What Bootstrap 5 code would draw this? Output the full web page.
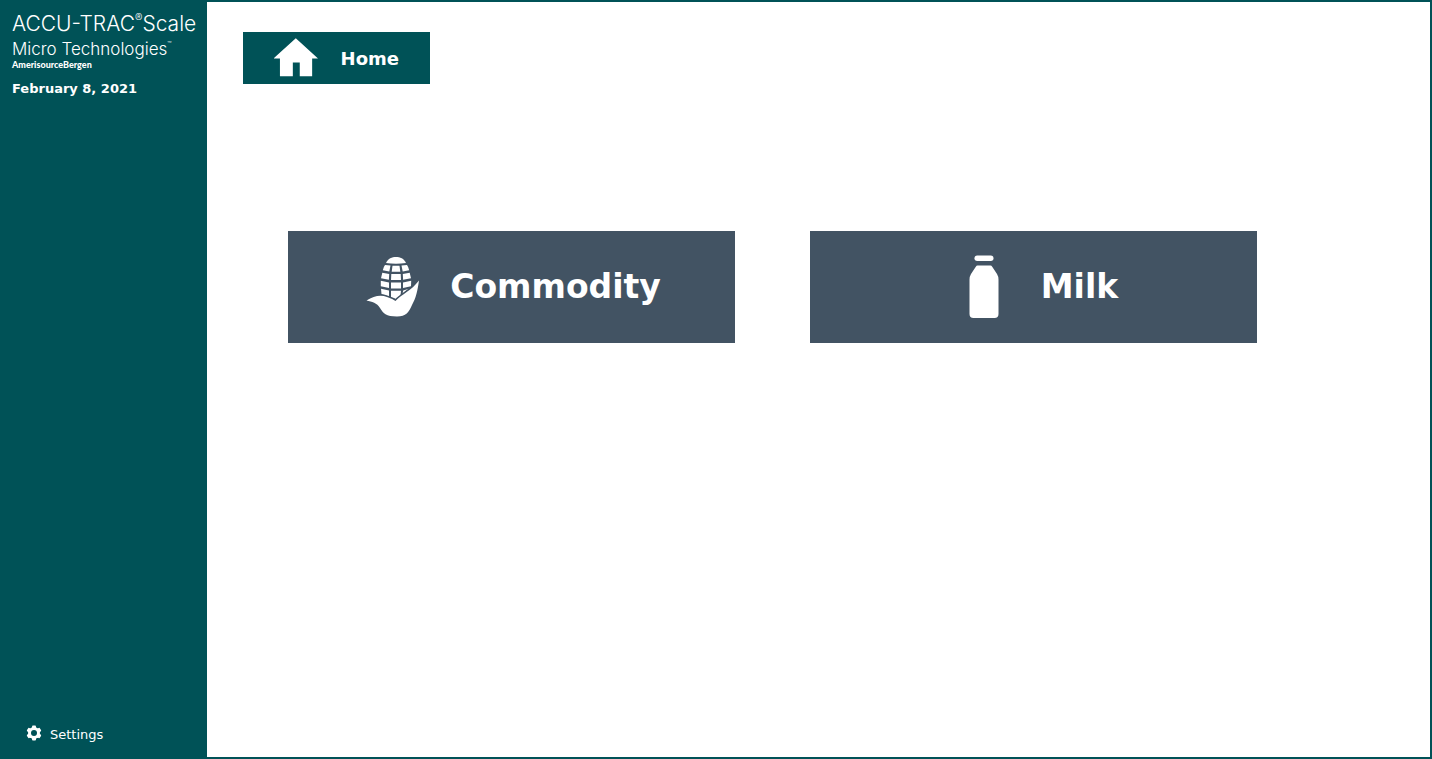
<!DOCTYPE html>
<html lang="en">
<head>
<meta charset="utf-8">
<meta name="viewport" content="width=device-width, initial-scale=1">
<title>ACCU-TRAC Scale</title>
<link href="https://cdn.jsdelivr.net/npm/bootstrap@5.3.0/dist/css/bootstrap.min.css" rel="stylesheet">
<style>
  :root { --teal: #005257; --slate: #425363; }
  body { font-family: "DejaVu Sans", Verdana, sans-serif; background: var(--teal); }
  .side { width: 207px; padding: 12px 0 14px 12px; background: var(--teal); }
  .brand { font-family: Inter, sans-serif; font-weight: 300; white-space: nowrap; }
  .brand-product { font-size: 21px; line-height: 24px; }
  .brand-product sup { font-size: 11px; top: -9px; line-height: 0; }
  .brand-division { font-size: 17px; line-height: 26px; }
  .brand-division sup { font-size: 7px; top: -8px; line-height: 0; }
  .brand-company { font-family: Lato, sans-serif; font-weight: 900; font-size: 9px; line-height: 6px; }
  .today { font-size: 13px; line-height: 16px; margin-top: 13px; }
  .settings { font-size: 13px; line-height: 20px; gap: 8px; margin-left: 14px; }
  .page { margin: 2px 2px 2px 0; padding: 30px 36px; }
  .btn { --bs-btn-border-radius: 0; --bs-btn-border-width: 0; --bs-btn-color: #fff; --bs-btn-hover-color: #fff; --bs-btn-font-weight: 700; }
  .btn-home { --bs-btn-bg: var(--teal); --bs-btn-hover-bg: #00454a; width: 187px; height: 52px; font-size: 18px; gap: 23px; padding: 0 31px; }
  .choices { gap: 75px; padding: 0 45px; margin-top: 147px; }
  .btn-choice { --bs-btn-bg: var(--slate); --bs-btn-hover-bg: #364553; flex: 0 1 447px; height: 112px; font-size: 33px; line-height: 52px; gap: 30px; padding: 0 8px 0 12px; }
  .btn-milk { gap: 42px; padding-left: 28px; }
</style>
</head>
<body>
<div class="d-flex min-vh-100">
  <aside class="side d-flex flex-column flex-shrink-0 text-white">
    <div class="brand">
      <div class="brand-product">ACCU-TRAC<sup>®</sup>Scale</div>
      <div class="brand-division">Micro Technologies<sup>™</sup></div>
      <div class="brand-company">AmerisourceBergen</div>
    </div>
    <div class="today fw-bold">February 8, 2021</div>
    <a href="#" class="settings d-flex align-items-start mt-auto text-white text-decoration-none">
      <svg width="16" height="16" viewBox="0 0 16 16" aria-hidden="true">
        <g fill="#fff"><circle cx="8" cy="8" r="6"/>
          <rect x="6" y="0.500" width="4" height="15" rx="1"/>
          <rect x="6" y="0.500" width="4" height="15" rx="1" transform="rotate(60 8 8)"/>
          <rect x="6" y="0.500" width="4" height="15" rx="1" transform="rotate(120 8 8)"/></g>
        <circle cx="8" cy="8" r="3" fill="#005257"/>
      </svg>
      <span>Settings</span>
    </a>
  </aside>
  <main class="page flex-grow-1 bg-white">
    <button type="button" class="btn btn-home d-flex align-items-center">
      <svg width="44" height="40" viewBox="0 0 44 40" fill="#fff" aria-hidden="true">
        <path d="M22 0L44.500 20.500H38.500V38.500H26V24.500H19V38.500H6V20.500H-.5Z"/>
      </svg>
      <span>Home</span>
    </button>
    <div class="choices d-flex">
      <button type="button" class="btn btn-choice d-flex align-items-center justify-content-center">
        <svg width="54" height="62" viewBox="0 0 54 62" fill="#fff" aria-hidden="true">
          <path d="M20 7C22 2.500 26 1 30 1S38 2.500 40 7Q30 8.500 20 7Z"/>
          <path d="M19 9L24.500 9.600L23.300 15.500L16.800 14.300Q17.500 11 19 9ZM26.500 9.700H33.500L34.300 15.800H25.700ZM35.500 9.600L41 9Q42.500 11 43.200 14.300L36.700 15.500Z"/>
          <path d="M16.300 16.800L23.200 18L22.900 23.800L15 22.200ZM25.300 18H34.700L35 24H25ZM36.800 18L43.700 16.800L45 22.200L37.100 23.800Z"/>
          <path d="M14.800 24.800L23 26.500V32L14.800 30.300ZM25 26.500H35V32.400H25ZM37 26.500L45.200 24.800L45 30.300L37 32Z"/>
          <path d="M15 32.800L23 34.500V41L15.500 38ZM25 34.800H35L34.500 40L30 43L25 41.500ZM37.200 34.400L43 32.800L36.500 38Z"/>
          <path stroke="#425363" stroke-width="3" paint-order="stroke" d="M0.500 44.500C8 39.500 15 38.500 21 41Q27 43 29.500 45C36 38 45 35 53 24.500C51.500 35 50 42 46 49C43 56 40 60.500 31 60.500C20 60.500 17 57 14 52C11 47 6 45.500 0.500 44.500Z"/>
        </svg>
        <span>Commodity</span>
      </button>
      <button type="button" class="btn btn-choice btn-milk d-flex align-items-center justify-content-center">
        <svg width="30" height="64" viewBox="0 0 30 64" fill="#fff" aria-hidden="true">
          <rect x="5.500" y="0.500" width="19" height="5.500" rx="2.700"/>
          <path d="M8.500 10.500H21.500Q22.500 10.500 23.200 11.700L28 19Q29.500 21.500 29.500 24.500V59Q29.500 63 25.500 63H4.500Q0.500 63 0.500 59V24.500Q0.500 21.500 2 19L6.800 11.700Q7.500 10.500 8.500 10.500Z"/>
        </svg>
        <span>Milk</span>
      </button>
    </div>
  </main>
</div>
<script src="https://cdn.jsdelivr.net/npm/bootstrap@5.3.0/dist/js/bootstrap.bundle.min.js"></script>
</body>
</html>
